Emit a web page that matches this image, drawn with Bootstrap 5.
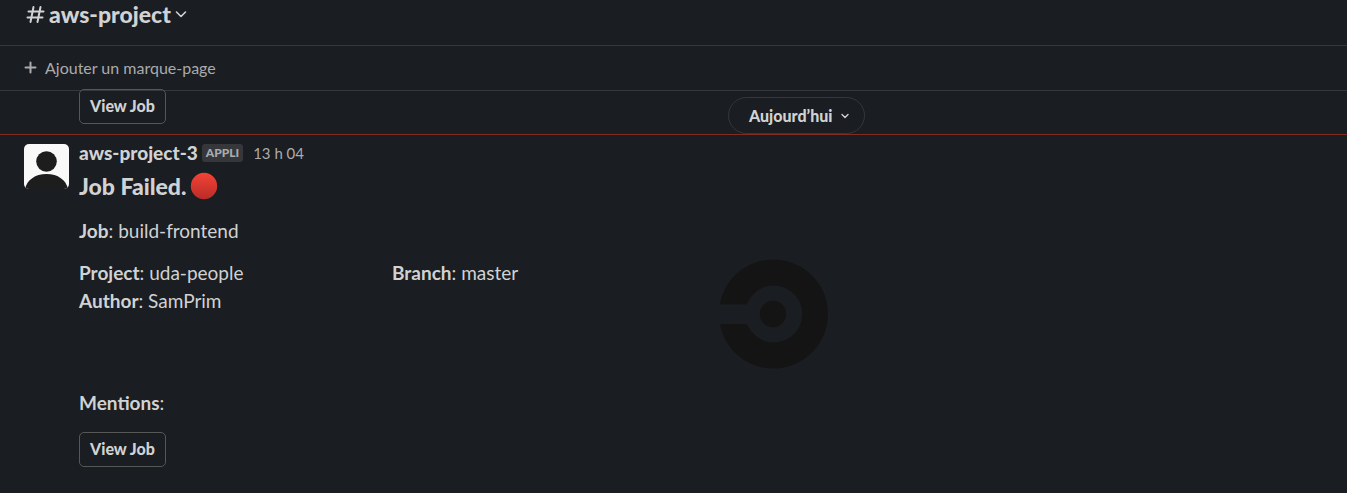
<!DOCTYPE html>
<html lang="fr" data-bs-theme="dark">
<head>
<meta charset="utf-8">
<meta name="viewport" content="width=device-width, initial-scale=1">
<title>aws-project</title>
<link href="https://cdn.jsdelivr.net/npm/bootstrap@5.3.0/dist/css/bootstrap.min.css" rel="stylesheet">
<style>
  body { background: #1a1d21; color: #d1d2d3; font-family: Lato, sans-serif; font-size: 19px; line-height: 28px; }
  .bar { height: 45px; border-bottom: 1px solid #35373b; box-sizing: content-box; padding-left: 24px; }
  .channel-bar { height: 45px; }
  .channel-name { font-size: 23px; line-height: 28px; font-weight: 900; color: #d1d2d3; }
  .bookmark-bar { height: 44px; }
  .bookmark { font-size: 16px; line-height: 24px; color: #ababad; }
  .plain { background: none; border: 0; padding: 0; }
  .previous { height: 43px; padding-left: 79px; }
  .action { font-size: 16px; line-height: 22px; font-weight: 900; color: #d1d2d3; border: 1px solid #565856; border-radius: 5px; padding: 5px 10px 6px; }
  .previous .action { margin-top: -2px; }
  .divider { border-top: 1px solid #832c20; }
  .day { top: 6px; left: 728px; height: 37px; padding: 0 14px 0 20px; font-size: 16px; line-height: 24px; font-weight: 900; color: #d1d2d3; background: #1a1d21; border: 1px solid #35373b; border-radius: 24px; }
  .message { padding: 9px 24px 0; gap: 10px; }
  .avatar { width: 45px; height: 45px; border-radius: 5px; }
  .author { font-weight: 900; line-height: 18px; }
  .tag { font-size: 12px; line-height: 18px; font-weight: 900; color: #ababad; background: #35373b; border-radius: 3px; padding: 0 4px; }
  .time { font-size: 15px; line-height: 18px; color: #ababad; text-decoration: none; margin-left: 10px; }
  .headline { font-size: 23px; line-height: 30px; font-weight: 900; color: inherit; margin: 9px 0 0; }
  .fields { width: 626px; }
  .details { min-height: 130px; margin-top: 14px; gap: 14px; }
  .mentions { margin-bottom: 15px; }
  .ci-logo { width: 110px; height: 110px; }
</style>
</head>
<body>
<header class="bar channel-bar d-flex align-items-start">
  <button class="plain channel-name d-flex align-items-center">
    <svg class="me-1" width="21" height="24" viewBox="0 0 21 24" fill="none" stroke="currentColor" stroke-width="2" stroke-linecap="round" aria-hidden="true"><path d="M9.500 5 6.500 20M16.500 5l-3 15M4.500 9.500H19.500M3.500 15.500H18.500"/></svg>
    <span>aws-project</span>
    <svg class="ms-1" width="14" height="14" viewBox="0 0 14 14" fill="none" stroke="currentColor" stroke-width="1.600" stroke-linecap="round" stroke-linejoin="round" aria-hidden="true"><path d="m1.500 5 4.500 4.500L10.500 5"/></svg>
  </button>
</header>
<nav class="bar bookmark-bar d-flex align-items-center">
  <button class="plain bookmark d-flex align-items-center gap-2">
    <svg width="13" height="14" viewBox="0 0 13 14" fill="none" stroke="currentColor" stroke-width="2" stroke-linecap="round" aria-hidden="true"><path d="M6.500 1.500v10M1.500 6.500h10"/></svg>
    <span>Ajouter un marque-page</span>
  </button>
</nav>
<main class="position-relative">
  <div class="previous d-flex align-items-start">
    <button class="btn action">View Job</button>
  </div>
  <div class="divider"></div>
  <button class="day position-absolute d-flex align-items-center gap-2">
    <span>Aujourd’hui</span>
    <svg width="10" height="10" viewBox="0 0 10 10" fill="none" stroke="currentColor" stroke-width="1.400" stroke-linecap="round" stroke-linejoin="round" aria-hidden="true"><path d="m2 3.500 3 3 3-3"/></svg>
  </button>
  <article class="message d-flex align-items-start">
    <svg class="avatar flex-shrink-0" viewBox="0 0 45 45" role="img" aria-label="aws-project-3"><path fill="#f9f9f9" d="M0 0h45v45H0z"/><circle cx="22.500" cy="17.500" r="10.300" fill="#1d1d1d"/><path fill="#1d1d1d" d="M1 45c2-9 10-15 21.500-15S42 36 44 45z"/></svg>
    <div class="flex-grow-1">
      <div class="d-flex align-items-center">
        <span class="author">aws-project-3</span>
        <span class="tag ms-1">APPLI</span>
        <a class="time" href="#">13 h 04</a>
      </div>
      <h1 class="headline d-flex align-items-center">Job Failed.
        <svg class="ms-1" width="28" height="28" viewBox="0 0 28 28" role="img" aria-label="rouge"><defs><linearGradient id="red" x2="0" y2="1"><stop stop-color="#f44336"/><stop offset="1" stop-color="#b92c28"/></linearGradient></defs><circle cx="14" cy="14" r="13.200" fill="url(#red)"/></svg>
      </h1>
      <p class="mt-3 mb-0"><b>Job</b>: build-frontend</p>
      <div class="details d-flex align-items-start">
        <div class="fields row gx-0">
          <div class="col-6"><b>Project</b>: uda-people</div>
          <div class="col-6"><b>Branch</b>: master</div>
          <div class="col-6"><b>Author</b>: SamPrim</div>
        </div>
        <svg class="ci-logo" viewBox="0 0 110 110" role="img" aria-label="CircleCI"><g fill="#141414"><circle cx="54" cy="55" r="13.200"/><path d="M2.500 45.500Q1 45.500 1.300 43A54.500 54.500 0 1 1 1.300 67Q1 65 2.500 65H26Q28 65 29 67A28.500 28.500 0 1 0 29 43Q28 45.500 26 45.500Z"/></g></svg>
      </div>
      <p class="mentions"><b>Mentions</b>:</p>
      <button class="btn action">View Job</button>
    </div>
  </article>
</main>
<script src="https://cdn.jsdelivr.net/npm/bootstrap@5.3.0/dist/js/bootstrap.bundle.min.js"></script>
</body>
</html>
